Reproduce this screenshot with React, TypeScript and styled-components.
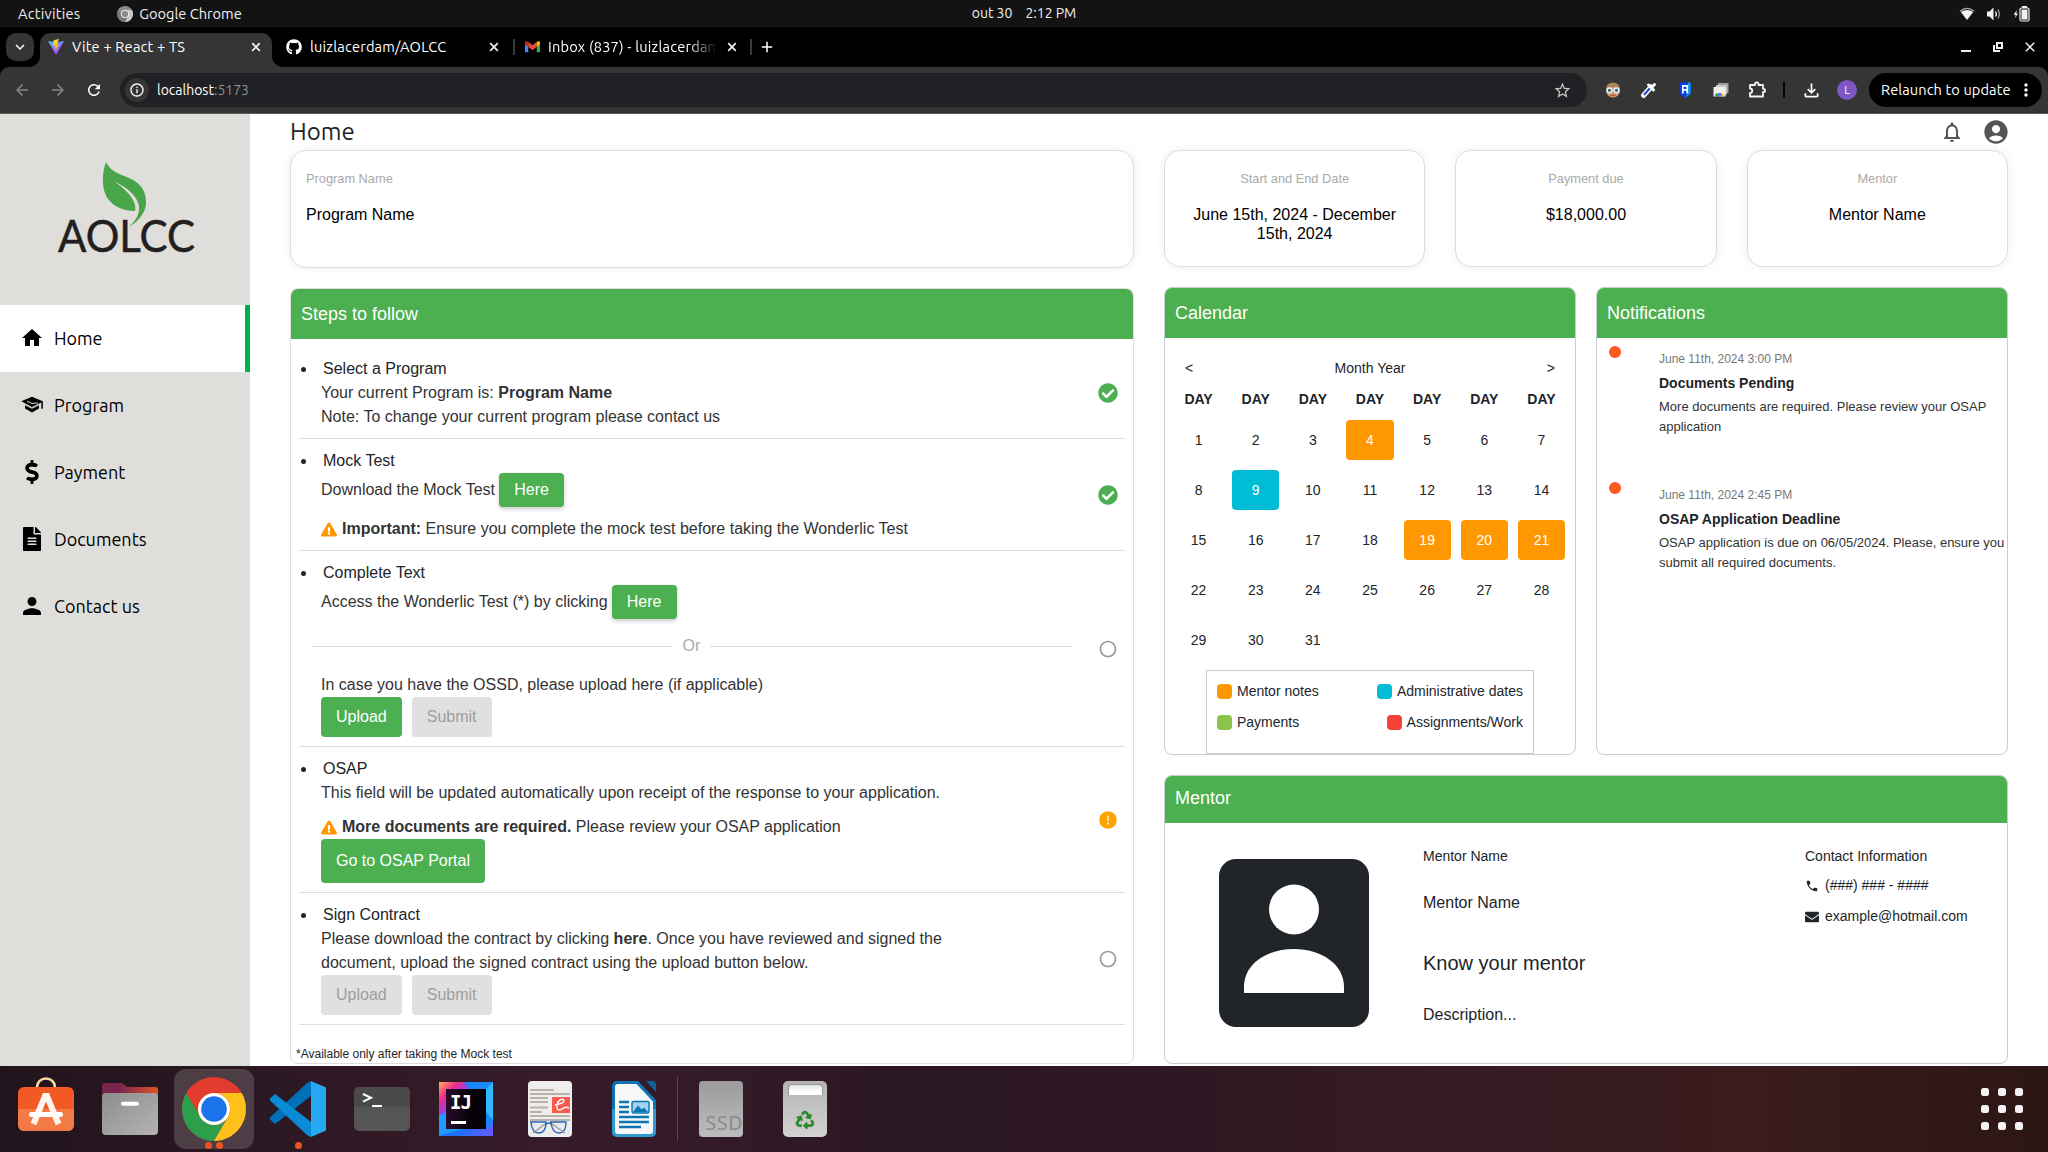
import React from 'react';
import styled, { createGlobalStyle, css } from 'styled-components';
import {
  MdAccountCircle,
  MdArrowBack,
  MdArrowForward,
  MdClose,
  MdHome,
  MdInfoOutline,
  MdNotificationsNone,
  MdRadioButtonUnchecked,
  MdRefresh,
  MdStarOutline,
  MdOutlineFileDownload,
  MdMoreVert,
  MdKeyboardArrowDown,
  MdAdd,
  MdPhone,
} from 'react-icons/md';
import { IoMdPerson } from 'react-icons/io';
import { FaCheckCircle, FaDollarSign, FaEnvelope, FaExclamationTriangle, FaFileAlt, FaGithub, FaRecycle } from 'react-icons/fa';
import { AiFillExclamationCircle } from 'react-icons/ai';

const GREEN = '#4caf50';
const UI_FONT = `Ubuntu, 'Noto Sans', sans-serif`;
const PAGE_FONT = `'Liberation Sans', Arial, sans-serif`;

const GlobalStyle = createGlobalStyle`
  *, *::before, *::after { box-sizing: border-box; }
  html, body { margin: 0; padding: 0; background: #fff; }
  body { overflow: hidden; font-family: ${PAGE_FONT}; color: #212529; }
  h1, h2, h3, p, ul { margin: 0; padding: 0; font-weight: 400; }
  svg { display: block; flex: none; overflow: visible; }
`;

const Desktop = styled.div`
  width: 2048px;
  height: 1152px;
  display: flex;
  flex-direction: column;
  overflow: hidden;
`;

/* ---------- system bar ---------- */

const SystemBar = styled.header`
  height: 27px;
  flex: none;
  display: grid;
  grid-template-columns: 1fr auto 1fr;
  align-items: center;
  background: #131313;
  color: #f0f0f0;
  font: 14px/27px ${UI_FONT};
`;
const SystemLeft = styled.div`
  display: flex;
  align-items: center;
  padding-left: 18px;
  font-size: 14.6px;
`;
const UiText = styled.span<{ $spacing?: number }>`
  letter-spacing: ${(p) => p.$spacing ?? 0}px;
  white-space: nowrap;
`;
const AppMenu = styled.div`
  display: flex;
  align-items: center;
  gap: 6px;
  margin-left: 37px;
`;
const Clock = styled.div`
  display: flex;
  gap: 13px;
`;
const SystemTray = styled.div`
  display: flex;
  justify-content: flex-end;
  align-items: center;
  gap: 11px;
  padding-right: 18px;
`;

/* ---------- browser ---------- */

const TabStrip = styled.div`
  height: 40px;
  flex: none;
  display: flex;
  align-items: center;
  padding-left: 6px;
  background: #000;
  color: #fff;
  font: 14.6px/20px ${UI_FONT};
`;
const TabSearch = styled.button`
  width: 28px;
  height: 28px;
  padding: 0;
  border: 0;
  border-radius: 10px;
  background: #353535;
  color: #fff;
  display: grid;
  place-items: center;
`;
const Tab = styled.div<{ $active?: boolean; $width: number; $left?: number; $right?: number }>`
  position: relative;
  width: ${(p) => p.$width}px;
  height: 34px;
  margin-top: 6px;
  padding: 0 ${(p) => p.$right ?? 10}px 6px ${(p) => p.$left ?? 8}px;
  display: flex;
  align-items: center;
  gap: 8px;
  border-radius: 10px 10px 0 0;
  ${(p) =>
    p.$active &&
    css`
      margin-left: 6px;
      background: #353535;
      &::before,
      &::after {
        content: '';
        position: absolute;
        bottom: 0;
        width: 10px;
        height: 10px;
      }
      &::before {
        left: -10px;
        background: radial-gradient(circle at 0 0, transparent 9.5px, #353535 10px);
      }
      &::after {
        right: -10px;
        background: radial-gradient(circle at 100% 0, transparent 9.5px, #353535 10px);
      }
    `}
`;
const TabTitle = styled.span<{ $fade?: boolean }>`
  flex: 1;
  min-width: 0;
  overflow: hidden;
  white-space: nowrap;
  letter-spacing: 0.2px;
  ${(p) =>
    p.$fade &&
    css`
      -webkit-mask-image: linear-gradient(90deg, #000 82%, transparent 99%);
      mask-image: linear-gradient(90deg, #000 82%, transparent 99%);
    `}
`;
const TabDivider = styled.i`
  width: 2px;
  height: 16px;
  background: #3a3a3a;
`;
const NewTab = styled.div`
  margin-left: 6px;
`;
const WindowButtons = styled.div`
  margin-left: auto;
  display: flex;
  align-items: center;
  gap: 16px;
  padding-right: 10px;
`;

const ToolbarBack = styled.div`
  height: 47px;
  flex: none;
  background: #000;
`;
const Toolbar = styled.div`
  height: 47px;
  display: flex;
  align-items: center;
  padding: 0 6px 0 13px;
  background: #353535;
  border-bottom: 1px solid #5d585b;
  border-radius: 9px 9px 0 0;
  color: #fff;
`;
const NavButtons = styled.div`
  display: flex;
  gap: 18px;
  width: 107px;
`;
const AddressBar = styled.div`
  width: 1467px;
  height: 34px;
  padding: 0 15px 0 5px;
  display: flex;
  align-items: center;
  border-radius: 17px;
  background: #202124;
  font: 14px/20px ${UI_FONT};
`;
const SiteInfo = styled.div`
  width: 24px;
  height: 24px;
  margin-right: 8px;
  border-radius: 50%;
  display: grid;
  place-items: center;
  background: #353535;
`;
const Port = styled.span`
  color: #909193;
`;
const StarSlot = styled.div`
  margin-left: auto;
  color: #c7c7c7;
`;
const Extensions = styled.div`
  display: flex;
  align-items: center;
  gap: 18px;
  padding-left: 17px;
`;
const ToolbarDivider = styled.i`
  width: 2px;
  height: 16px;
  margin: 0 16px 0 17px;
  background: #050505;
`;
const Avatar = styled.div`
  width: 20px;
  height: 20px;
  margin-left: 15px;
  border-radius: 50%;
  background: #7e57c2;
  font: 11px/20px ${UI_FONT};
  text-align: center;
`;
const Relaunch = styled.div`
  margin-left: auto;
  width: 173px;
  height: 34px;
  padding: 0 6px 0 12px;
  display: flex;
  align-items: center;
  justify-content: space-between;
  border-radius: 17px;
  background: #000;
  font: 14.6px/20px ${UI_FONT};
`;

/* ---------- web page ---------- */

const Page = styled.div`
  height: 952px;
  flex: none;
  display: grid;
  grid-template-columns: 250px 1fr;
  background: #fff;
  overflow: hidden;
`;
const Sidebar = styled.aside`
  background: #dfdeda;
  font-family: ${UI_FONT};
`;
const LogoBox = styled.div`
  height: 191px;
  padding: 44px 0 0 52px;
`;
const NavItem = styled.a<{ $active?: boolean }>`
  height: 67px;
  display: grid;
  grid-template-columns: 24px 1fr;
  align-items: center;
  gap: 10px;
  padding: 0 0 1px 20px;
  color: #000;
  font-size: 18px;
  background: ${(p) => (p.$active ? '#fff' : 'transparent')};
  border-right: 5px solid ${(p) => (p.$active ? '#00b050' : 'transparent')};
`;
const NavIcon = styled.span`
  display: grid;
  place-items: center;
  font-size: 24px;
`;
const Content = styled.main`
  padding: 0 40px;
  display: flex;
  flex-direction: column;
`;
const PageHeader = styled.div`
  height: 36px;
  display: flex;
  align-items: center;
  justify-content: space-between;
`;
const PageTitle = styled.h1`
  font: 400 24px/36px ${UI_FONT};
`;
const HeaderIcons = styled.div`
  display: flex;
  align-items: center;
  gap: 18px;
  margin-right: -2px;
  color: #555;
`;
const Columns = styled.div`
  display: grid;
  grid-template-columns: 844px 844px;
  gap: 30px;
`;
const Column = styled.div`
  display: flex;
  flex-direction: column;
  gap: 20px;
`;
const CardRow = styled.div`
  display: grid;
  grid-template-columns: repeat(3, 1fr);
  gap: 30px;
`;
const InfoCard = styled.section<{ $height: number; $center?: boolean }>`
  height: ${(p) => p.$height}px;
  padding: 20px 15px;
  border: 1px solid #ddd;
  border-radius: 16px;
  background: #fff;
  box-shadow: 0 0 10px rgba(0, 0, 0, 0.07);
  text-align: ${(p) => (p.$center ? 'center' : 'left')};
`;
const CardLabel = styled.p`
  font-size: 12.8px;
  line-height: 16px;
  color: #aaa;
`;
const CardValue = styled.p`
  margin-top: 18px;
  font-size: 16px;
  line-height: 19.2px;
  color: #000;
`;
const Panel = styled.section<{ $height: number; $tone?: string }>`
  height: ${(p) => p.$height}px;
  display: flex;
  flex-direction: column;
  border: 1px solid ${(p) => p.$tone ?? '#ccc'};
  border-radius: 8px;
  background: #fff;
  overflow: hidden;
`;
const PanelTitle = styled.h2<{ $height?: number; $line?: number }>`
  height: ${(p) => p.$height ?? 50}px;
  flex: none;
  padding: 0 10px;
  background: ${GREEN};
  color: #fff;
  font-size: 18px;
  line-height: ${(p) => p.$line ?? 50}px;
`;

/* steps */

const StepList = styled.ul`
  list-style: none;
  padding: 8px 8px 0;
`;
const Step = styled.li`
  padding: 10px 7px 9px 2px;
  display: flex;
  align-items: center;
  justify-content: space-between;
  border-bottom: 1px solid #ddd;
  font-size: 16px;
  line-height: 24px;
`;
const StepBody = styled.div<{ $wide?: boolean }>`
  width: ${(p) => (p.$wide ? 771 : 680)}px;
`;
const StepTitle = styled.h3`
  display: flex;
  align-items: center;
  gap: 17px;
  font-size: 16px;
  line-height: 24px;
  &::before {
    content: '';
    width: 5px;
    height: 5px;
    border-radius: 50%;
    background: #212529;
  }
`;
const StepLine = styled.p<{ $gap?: number }>`
  display: flex;
  align-items: center;
  margin-top: ${(p) => p.$gap ?? 0}px;
  padding-left: 20px;
  color: #333;
  white-space: pre;
`;
const WarningIcon = styled(FaExclamationTriangle)`
  width: 16px;
  height: 15px;
  margin-right: 5px;
  color: #ff9800;
`;
const InlineButton = styled.button`
  width: 65px;
  height: 34px;
  margin-left: 4px;
  padding: 0;
  border: 0;
  border-radius: 4px;
  background: ${GREEN};
  color: #fff;
  font: 16px/34px ${PAGE_FONT};
  box-shadow: 0 2px 4px rgba(0, 0, 0, 0.22);
`;
const ButtonRow = styled.div`
  display: flex;
  gap: 10px;
  padding-left: 20px;
`;
const ActionButton = styled.button<{ $disabled?: boolean; $height?: number }>`
  height: ${(p) => p.$height ?? 40}px;
  padding: 0 15px;
  border: 0;
  border-radius: 4px;
  background: ${(p) => (p.$disabled ? '#e0e0e0' : GREEN)};
  color: ${(p) => (p.$disabled ? '#9e9e9e' : '#fff')};
  font: 16px/24px ${PAGE_FONT};
`;
const OrDivider = styled.div`
  height: 54px;
  padding-left: 10px;
  display: flex;
  align-items: center;
  gap: 10px;
  color: #aaa;
  &::before,
  &::after {
    content: '';
    flex: 1;
    height: 1px;
    margin-top: 1px;
    background: #ddd;
  }
`;
const StepStatus = styled.span<{ $color: string }>`
  width: 20px;
  display: grid;
  place-items: center;
  font-size: 20px;
  color: ${(p) => p.$color};
`;
const Footnote = styled.p`
  margin: 20px 0 0 5px;
  font-size: 12px;
  line-height: 18px;
`;

/* calendar */

const CalendarBody = styled.div`
  padding: 20px 10px 0;
  font-size: 14px;
  line-height: 21px;
  display: flex;
  flex-direction: column;
  flex: 1;
`;
const MonthBar = styled.div`
  display: flex;
  justify-content: space-between;
  padding: 0 10px;
  margin-bottom: 10px;
`;
const DayGrid = styled.div`
  display: grid;
  grid-template-columns: repeat(7, 1fr);
  gap: 10px;
  text-align: center;
`;
const Weekday = styled.b`
  line-height: 21px;
`;
const Day = styled.span<{ $mark?: string }>`
  line-height: 40px;
  border-radius: 4px;
  background: ${(p) => p.$mark ?? 'transparent'};
  color: ${(p) => (p.$mark ? '#fff' : 'inherit')};
`;
const Legend = styled.div`
  width: 328px;
  margin: 10px auto 0;
  flex: 1;
  padding: 10px;
  display: flex;
  flex-direction: column;
  gap: 10px;
  border: 1px solid #ccc;
`;
const LegendRow = styled.div`
  display: flex;
  justify-content: space-between;
`;
const LegendItem = styled.span`
  display: flex;
  align-items: center;
  gap: 5px;
`;
const Swatch = styled.i<{ $color: string }>`
  width: 15px;
  height: 15px;
  border-radius: 4px;
  background: ${(p) => p.$color};
`;
const PanelPair = styled.div`
  display: grid;
  grid-template-columns: 1fr 1fr;
  gap: 20px;
`;

/* notifications */

const Notice = styled.article`
  height: 136px;
  display: grid;
  grid-template-columns: 50px 1fr;
  padding: 8px 0 0 12px;
`;
const NoticeDot = styled.i`
  width: 12px;
  height: 12px;
  border-radius: 50%;
  background: #ff5722;
`;
const NoticeTime = styled.p`
  margin-top: 4px;
  font-size: 12px;
  line-height: 18px;
  color: #777;
`;
const NoticeTitle = styled.p`
  margin-top: 5px;
  font-size: 14px;
  line-height: 21px;
  font-weight: 700;
`;
const NoticeText = styled.p`
  margin-top: 3px;
  font-size: 13px;
  line-height: 19.5px;
  color: #333;
`;

/* mentor */

const MentorBody = styled.div`
  display: grid;
  grid-template-columns: 258px 382px 1fr;
`;
const Portrait = styled.div`
  padding: 36px 0 0 54px;
`;
const MentorInfo = styled.div`
  padding-top: 21px;
`;
const MentorLine = styled.p<{ $size: number; $top: number }>`
  margin-top: ${(p) => p.$top}px;
  font-size: ${(p) => p.$size}px;
  line-height: 24px;
`;
const ContactLine = styled.p<{ $top: number }>`
  margin-top: ${(p) => p.$top}px;
  display: flex;
  align-items: center;
  gap: 6px;
  font-size: 14px;
  line-height: 21px;
`;

/* ---------- dock ---------- */

const Dock = styled.footer`
  height: 86px;
  flex: none;
  display: flex;
  align-items: center;
  padding: 0 20px 0 4px;
  background: linear-gradient(
    90deg,
    #21141c 0,
    #2b1822 12%,
    #361b29 26%,
    #351b29 33%,
    #2a1722 44%,
    #2d1722 56%,
    #371b24 72%,
    #3a1c1c 86%,
    #2c1614 100%
  );
`;
const DockItem = styled.div<{ $active?: boolean }>`
  position: relative;
  width: 80px;
  height: 80px;
  margin: 0 2px;
  display: grid;
  place-items: center;
  border-radius: 12px;
  background: ${(p) => (p.$active ? 'rgba(255,255,255,0.17)' : 'transparent')};
`;
const RunningDots = styled.div`
  position: absolute;
  left: 0;
  right: 0;
  bottom: 0;
  display: flex;
  justify-content: center;
  gap: 4px;
  i {
    width: 7px;
    height: 7px;
    border-radius: 50%;
    background: #e95420;
  }
`;
const DockDivider = styled.i`
  width: 1px;
  height: 64px;
  margin: 0 1px;
  background: #5a444f;
`;
const AppsGrid = styled.div`
  margin-left: auto;
  display: grid;
  grid-template-columns: repeat(3, 8px);
  grid-auto-rows: 8px;
  gap: 9px;
  padding-right: 5px;
  i {
    border-radius: 2.5px;
    background: #f4f2f3;
  }
`;

/* ---------- drawings ---------- */

const ChromeGlyph = ({ size, mono }: { size: number; mono?: boolean }) => {
  const [r, g, y, b] = mono ? ['#8d8d8d', '#777', '#c9c9c9', '#8a8a8a'] : ['#e33b2e', '#2c9f4c', '#fcc21b', '#1a73e8'];
  return (
    <svg width={size} height={size} viewBox="0 0 64 64">
      <circle cx="32" cy="32" r="32" fill={r} />
      <path d="M4.3 16 A32 32 0 0 0 32 64 L46 40 A16 16 0 0 1 18.2 40 Z" fill={g} />
      <path d="M32 16 H59.7 A32 32 0 0 1 32 64 L46 40 A16 16 0 0 0 32 16Z" fill={y} />
      <circle cx="32" cy="32" r="16" fill="#fff" />
      <circle cx="32" cy="32" r="12.8" fill={b} />
    </svg>
  );
};

const ViteGlyph = () => (
  <svg width="16" height="16" viewBox="0 0 32 32">
    <defs>
      <linearGradient id="vite-body" x1="0" y1="0" x2=".6" y2="1">
        <stop offset="0" stopColor="#41d1ff" />
        <stop offset="1" stopColor="#bd34fe" />
      </linearGradient>
      <linearGradient id="vite-bolt" x1="0" y1="0" x2="0" y2="1">
        <stop offset="0" stopColor="#ffdd35" />
        <stop offset="1" stopColor="#ffa800" />
      </linearGradient>
    </defs>
    <path d="M0 4 L16 32 L32 4 L17 7Z" fill="url(#vite-body)" />
    <path d="M22 0 L11 2.3 L10.3 14 L14.5 13 L13 19 L16 18 L14.5 25 L21.5 11 L17.5 12Z" fill="url(#vite-bolt)" />
  </svg>
);

const GmailGlyph = () => (
  <svg width="15" height="16" viewBox="0 0 32 26">
    <path d="M0 6 V24 H7 V11Z" fill="#4285f4" />
    <path d="M25 11 V24 H32 V6Z" fill="#34a853" />
    <path d="M7 2 V13 L16 20 L25 13 V2 L16 9Z" fill="#ea4335" />
    <path d="M25 2 V13 L32 7 V4 C32 0 28 0 25 2Z" fill="#fbbc04" />
    <path d="M7 2 V13 L0 7 V4 C0 0 4 0 7 2Z" fill="#c5221f" />
  </svg>
);

const LeafLogo = () => (
  <svg width="150" height="104" viewBox="0 0 150 104">
    <text
      x="6"
      y="94"
      fontFamily="Lato, sans-serif"
      fontSize="43.5"
      fill="#231f20"
      stroke="#231f20"
      strokeWidth=".5"
      textLength="137"
      lengthAdjust="spacingAndGlyphs"
    >
      AOLCC
    </text>
    <path
      fill="#48a548"
      d="M54 4 C50 15 49 31 56 41 C62 49 72 53 83 53 C85 46 80 36 62 23 C76 30 85 38 87 48 C88 57 83 63 77 69 C88 62 95 53 94 42 C93 30 86 24 77 20 C67 16 58 13 54 4Z"
    />
  </svg>
);

const CapGlyph = () => (
  <svg width="24" height="24" viewBox="0 0 24 24">
    <path d="M1.200 8.300 L12 3.800 L22.800 8.300 V15.800 H21.300 V9.600 L12 14 Z" />
    <path d="M5 11.500 L12 15 L19 11.500 V15.500 L12 19.500 L5 15.500Z" />
    <path d="M7 8.700 Q10.500 9 12 10.600 Q14.500 9.600 18 10.200" fill="none" stroke="#dfdeda" strokeWidth="1" />
    <path d="M5 12 L12 15.300 L19 12" fill="none" stroke="#dfdeda" strokeWidth=".9" />
  </svg>
);

const PortraitGlyph = () => (
  <svg width="150" height="168" viewBox="0 0 150 168">
    <rect width="150" height="168" rx="17" fill="#212529" />
    <circle cx="75" cy="50.5" r="25" fill="#fff" />
    <path d="M25 134 V128 C25 105 48 90 75 90 C102 90 125 105 125 128 V134Z" fill="#fff" />
  </svg>
);

const PuzzleGlyph = () => (
  <svg width="18" height="18" viewBox="0 0 18 18">
    <path
      d="M2 4 H7 V3.200 A1.500 1.500 0 0 1 10.500 3.200 V4 H15 V7.800 H15.500 A1.500 1.500 0 0 1 15.500 11 H15 V15.500 H2 V12 A2.200 2.200 0 0 0 2 7.500Z"
      fill="none"
      stroke="#f4f4f4"
      strokeWidth="1.800"
      strokeLinejoin="round"
    />
  </svg>
);

const WifiGlyph = () => (
  <svg width="16" height="14" viewBox="0 0 16 14">
    <path d="M1 4.200 Q8 -1.500 15 4.200" fill="none" stroke="#aaa" strokeWidth="1.400" />
    <path d="M1.800 5 Q8 1 14.200 5 L8 13Z" fill="#f2f2f2" />
  </svg>
);
const VolumeGlyph = () => (
  <svg width="16" height="14" viewBox="0 0 16 14">
    <path d="M1 4.500 H3.500 L7.500 .5 V13.500 L3.500 9.500 H1Z" fill="#f2f2f2" />
    <path d="M9.500 4.500 Q11.200 7 9.500 9.500" stroke="#f2f2f2" strokeWidth="1.300" fill="none" />
    <path d="M11.800 2.500 Q15 7 11.800 11.500" stroke="#999" strokeWidth="1.300" fill="none" />
  </svg>
);
const BatteryGlyph = () => (
  <svg width="17" height="16" viewBox="0 0 17 16">
    <path d="M4 4 L.5 8.700 H2.700 L2 12 L5 7.500 H3.200Z" fill="#f2f2f2" />
    <rect x="9" y="0" width="5" height="2" fill="#f2f2f2" />
    <rect x="7" y="2" width="9" height="13" rx="1.500" fill="none" stroke="#f2f2f2" strokeWidth="1.200" />
    <rect x="8.500" y="3.500" width="6" height="10" fill="#f2f2f2" />
  </svg>
);

const MinimizeGlyph = () => (
  <svg width="16" height="16" viewBox="0 0 16 16">
    <rect x="3" y="11" width="10" height="2" fill="#eee" />
  </svg>
);
const RestoreGlyph = () => (
  <svg width="16" height="16" viewBox="0 0 16 16" fill="none" stroke="#eee" strokeWidth="2">
    <rect x="7" y="4" width="5" height="5" />
    <path d="M4 6 V12 H10" />
  </svg>
);
const CrossGlyph = ({ size = 10, stroke = 1.7 }: { size?: number; stroke?: number }) => (
  <svg width={size} height={size} viewBox="0 0 10 10" stroke="#f1f1f1" strokeWidth={stroke}>
    <path d="M1.200 1.200 L8.800 8.800 M8.800 1.200 L1.200 8.800" />
  </svg>
);

const FaceExtension = () => (
  <svg width="18" height="18" viewBox="0 0 18 18">
    <circle cx="9" cy="9.500" r="7" fill="#d39a72" />
    <path d="M2 8 Q2.500 1.500 9 1.500 Q15.500 1.500 16 8 Q9 4 2 8Z" fill="#a9835a" />
    <circle cx="5.500" cy="9.300" r="2.400" fill="#2f6a82" stroke="#e8f2f5" strokeWidth="1.500" />
    <circle cx="12.500" cy="9.300" r="2.400" fill="#2f6a82" stroke="#e8f2f5" strokeWidth="1.500" />
    <path d="M6.500 14 Q9 15.200 11.500 14" stroke="#b0453b" strokeWidth="1.300" fill="none" />
  </svg>
);
const PickerExtension = () => (
  <svg width="18" height="18" viewBox="0 0 18 18">
    <path d="M3.500 14.500 L11 6" stroke="#fff" strokeWidth="5" strokeLinecap="round" />
    <path d="M4.500 13.300 L9.500 7.700" stroke="#2a4cc4" strokeWidth="2.200" strokeLinecap="round" />
    <path d="M8.500 4 L13.500 9 M12 6 L14.500 3.500" stroke="#fff" strokeWidth="3" strokeLinecap="round" />
  </svg>
);
const ShieldExtension = () => (
  <svg width="18" height="18" viewBox="0 0 18 18">
    <path d="M3.500 1.500 H14.500 V12.500 L9 17 L3.500 12.500Z" fill="#0a3df0" />
    <path d="M12 1.500 H14.500 V12.500 L9 17 L12 12Z" fill="#0fa0f5" />
    <path d="M6.800 12.500 V4.800 H11.200 V12.500 M6.800 8.800 H11.200" stroke="#fff" strokeWidth="1.700" fill="none" />
  </svg>
);
const StoreExtension = () => (
  <svg width="18" height="18" viewBox="0 0 18 18">
    <path d="M6 2 H16.500 V12 H6Z" fill="#9d9d9d" />
    <path d="M4 4 H15 V13.500 H4Z" fill="#c9c9c9" />
    <path d="M1.500 6 H13.500 V15.500 H1.500Z" fill="#efefef" />
    <path d="M3 15.500 A4.800 4.800 0 0 1 12 15.500Z" fill="#e03a2e" />
    <path d="M2.900 15.500 L4 11.800 L7 15.500Z" fill="#2fa04e" />
    <path d="M8 15.500 L11 12 L12 15.500Z" fill="#fbc02d" />
    <circle cx="7.500" cy="14" r="2" fill="#4285f4" />
  </svg>
);

const SoftwareIcon = () => (
  <svg width="56" height="56" viewBox="0 0 56 56">
    <path d="M19 8 V6 A9 8.500 0 0 1 37 6 V8" fill="none" stroke="#f5d9a6" strokeWidth="2.600" />
    <rect y="6" width="56" height="44" rx="6" fill="#f15a24" />
    <path d="M0 28 H56 V44 A6 6 0 0 1 50 50 H6 A6 6 0 0 1 0 44Z" fill="#f47a45" />
    <path d="M15.500 43 L27 15 H29 L40.500 43" fill="none" stroke="#fff4ee" strokeWidth="6" />
    <path d="M13.500 33.500 H42.500" stroke="#fff" strokeWidth="5" strokeLinecap="round" />
  </svg>
);
const FilesIcon = () => (
  <svg width="56" height="56" viewBox="0 0 56 56">
    <defs>
      <linearGradient id="files-tab">
        <stop offset=".3" stopColor="#78244f" />
        <stop offset="1" stopColor="#e35424" />
      </linearGradient>
      <linearGradient id="files-front" x1="0" y1="0" x2="1" y2="1">
        <stop offset="0" stopColor="#8d8d8d" />
        <stop offset="1" stopColor="#b4b4b4" />
      </linearGradient>
    </defs>
    <path d="M0 5 A3 3 0 0 1 3 2 H20 L25 6 H53 A3 3 0 0 1 56 9 V25 H0Z" fill="url(#files-tab)" />
    <rect y="12" width="56" height="42" rx="4" fill="url(#files-front)" />
    <path d="M21 22.800 H35" stroke="#fff" strokeWidth="4" strokeLinecap="round" />
  </svg>
);
const CodeIcon = () => (
  <svg width="56" height="56" viewBox="0 0 56 56">
    <path d="M41 15 L5 43 L0 38.500 V36.500 L37 2 L41 0Z" fill="#0071b8" />
    <path d="M41 41 L5 13 L0 17.500 V19.500 L37 54 L41 56Z" fill="#0a8bd6" />
    <path d="M41 0 L56 6.500 V49.500 L41 56Z" fill="#27a8f2" />
  </svg>
);
const TerminalIcon = () => (
  <svg width="56" height="56" viewBox="0 0 56 56">
    <rect y="6" width="56" height="44" rx="5" fill="#555" />
    <path d="M0 26 V11 A5 5 0 0 1 5 6 H51 A5 5 0 0 1 56 11 V26Z" fill="#4a4a4a" />
    <path d="M9 13 L17 16.800 L9 20.600" fill="none" stroke="#fff" strokeWidth="2" />
    <path d="M18 25 H28" stroke="#fff" strokeWidth="2" />
  </svg>
);
const IntelliJIcon = () => (
  <svg width="54" height="54" viewBox="0 0 54 54">
    <defs>
      <linearGradient id="ij-edge" x1="0" y1="0" x2="1" y2="1">
        <stop offset="0" stopColor="#ffb15a" />
        <stop offset=".18" stopColor="#f0288a" />
        <stop offset=".36" stopColor="#7c4dff" />
        <stop offset=".6" stopColor="#1273ff" />
        <stop offset="1" stopColor="#6a5cff" />
      </linearGradient>
      <linearGradient id="ij-core">
        <stop offset="0" stopColor="#2b0a2c" />
        <stop offset=".6" stopColor="#050308" />
      </linearGradient>
    </defs>
    <rect width="54" height="54" fill="url(#ij-edge)" />
    <path d="M54 0 V40 L47 47 V7 H30 L25 0Z" fill="#1787fb" />
    <path d="M0 54 V34 L7 30 V47 H24Z" fill="#1d9bff" />
    <path d="M54 0 L47 7 V30 L54 38Z" fill="#2fb8ff" />
    <rect x="7" y="7" width="40" height="40" fill="url(#ij-core)" />
    <text x="11" y="27" fontFamily="'DejaVu Sans Mono', monospace" fontWeight="700" fontSize="19" fill="#fff" textLength="22">
      IJ
    </text>
    <path d="M12 40.500 H27" stroke="#fff" strokeWidth="3" />
  </svg>
);
const ReaderIcon = () => (
  <svg width="44" height="56" viewBox="0 0 44 56">
    <rect width="44" height="56" rx="4" fill="#ededeb" />
    <path d="M2 9 H26 M2 13 H42 M2 17 H20 M2 21 H20 M2 26.500 H20 M2 31 H14 M2 35 H42 M2 39 H42" stroke="#b9b1a6" strokeWidth="2" />
    <rect x="24" y="16" width="18" height="16" fill="#fa5a4c" />
    <path d="M27 24 Q38 22 35.500 18.500 Q31 17 29 24 Q28 31 34 28 Q38 25 41 27" fill="none" stroke="#fff" strokeWidth="1.400" />
    <path d="M2 41 H18 Q18 52 10.500 52 Q4 52 3 41Z M22 41 H38 Q38 52 31 52 Q24 52 23 41Z M18 43 Q20.500 41 23 43" fill="rgba(230,233,238,.85)" stroke="#2767b8" strokeWidth="1.400" />
    <path d="M5 52 L17 43 M24 43 L37 52" stroke="#999" strokeWidth="1.300" />
  </svg>
);
const WriterIcon = () => (
  <svg width="44" height="56" viewBox="0 0 44 56">
    <path d="M5 0 H26 L44 19 V51 A5 5 0 0 1 39 56 H5 A5 5 0 0 1 0 51 V5 A5 5 0 0 1 5 0Z" fill="#0f75b0" />
    <path d="M0 28 H44 V51 A5 5 0 0 1 39 56 H5 A5 5 0 0 1 0 51Z" fill="#2f9bd0" />
    <path d="M34 0 H40 A4 4 0 0 1 44 4 V11Z" fill="#0f6296" />
    <path d="M6 3 H24.500 L41 20.500 V50 A3 3 0 0 1 38 53 H6 A3 3 0 0 1 3 50 V6 A3 3 0 0 1 6 3Z" fill="#f6f8fa" />
    <path d="M7 21 H17 M7 26 H17 M7 31 H17 M7 36 H37 M7 41 H37 M7 46 H29" stroke="#0f75b0" strokeWidth="2.300" />
    <rect x="20" y="20.500" width="17" height="11.500" rx="1.500" fill="#9fd4f2" stroke="#0f75b0" strokeWidth="1.400" />
    <path d="M21 31 L26 24.500 L29.500 28.500 L32 26.500 L36 31Z" fill="#0f75b0" />
  </svg>
);
const DiskIcon = () => (
  <svg width="44" height="56" viewBox="0 0 44 56">
    <defs>
      <linearGradient id="disk" x1="0" y1="0" x2="0" y2="1">
        <stop offset="0" stopColor="#9b9b9b" />
        <stop offset="1" stopColor="#bdbdbd" />
      </linearGradient>
    </defs>
    <rect width="44" height="56" rx="4" fill="url(#disk)" />
    <text x="6.500" y="48.500" fontFamily="'Noto Sans', sans-serif" fontSize="19.500" fill="#8b8b8b" textLength="37">
      SSD
    </text>
  </svg>
);
const TrashBody = styled.div`
  width: 44px;
  height: 56px;
  padding: 3px 4px 0;
  display: flex;
  flex-direction: column;
  align-items: center;
  gap: 16px;
  border-radius: 5px;
  background: linear-gradient(#b4b4b4, #d2d2d2);
`;
const TrashPaper = styled.i`
  width: 35px;
  height: 11px;
  border: 1px solid #999;
  border-bottom: 0;
  border-radius: 4px 4px 0 0;
  background: linear-gradient(#e2e2e2, #fff 60%);
`;
const RecycleMark = styled(FaRecycle)`
  stroke: #27882a;
  stroke-width: 14px;
`;

/* ---------- data ---------- */

const NAV = [
  { label: 'Home', icon: <MdHome /> },
  { label: 'Program', icon: <CapGlyph /> },
  { label: 'Payment', icon: <FaDollarSign /> },
  { label: 'Documents', icon: <FaFileAlt /> },
  { label: 'Contact us', icon: <IoMdPerson /> },
];

const MARKS: Record<number, string> = { 4: '#ff9800', 9: '#00bcd4', 19: '#ff9800', 20: '#ff9800', 21: '#ff9800' };

const NOTICES = [
  { time: 'June 11th, 2024 3:00 PM', title: 'Documents Pending', text: 'More documents are required. Please review your OSAP application' },
  {
    time: 'June 11th, 2024 2:45 PM',
    title: 'OSAP Application Deadline',
    text: 'OSAP application is due on 06/05/2024. Please, ensure you submit all required documents.',
  },
];

const Done = () => (
  <StepStatus $color={GREEN}>
    <FaCheckCircle />
  </StepStatus>
);
const Pending = () => (
  <StepStatus $color="#999">
    <MdRadioButtonUnchecked />
  </StepStatus>
);

const Browser = () => (
  <>
    <TabStrip>
      <TabSearch>
        <MdKeyboardArrowDown size={18} />
      </TabSearch>
      <Tab $active $width={232} $right={11}>
        <ViteGlyph />
        <TabTitle>Vite + React + TS</TabTitle>
        <CrossGlyph />
      </Tab>
      <Tab $width={241} $left={14} $right={14}>
        <FaGithub size={16} />
        <TabTitle>luizlacerdam/AOLCC</TabTitle>
        <CrossGlyph />
      </Tab>
      <TabDivider />
      <Tab $width={235} $left={10} $right={13}>
        <GmailGlyph />
        <TabTitle $fade>Inbox (837) - luizlacerdam</TabTitle>
        <CrossGlyph />
      </Tab>
      <TabDivider />
      <NewTab>
        <MdAdd size={18} />
      </NewTab>
      <WindowButtons>
        <MinimizeGlyph />
        <RestoreGlyph />
        <MdClose size={16} />
      </WindowButtons>
    </TabStrip>
    <ToolbarBack>
      <Toolbar>
        <NavButtons>
          <MdArrowBack size={18} color="#858585" />
          <MdArrowForward size={18} color="#858585" />
          <MdRefresh size={18} />
        </NavButtons>
        <AddressBar>
          <SiteInfo>
            <MdInfoOutline size={16} />
          </SiteInfo>
          <UiText>
            localhost<Port>:5173</Port>
          </UiText>
          <StarSlot>
            <MdStarOutline size={19} />
          </StarSlot>
        </AddressBar>
        <Extensions>
          <FaceExtension />
          <PickerExtension />
          <ShieldExtension />
          <StoreExtension />
          <PuzzleGlyph />
        </Extensions>
        <ToolbarDivider />
        <MdOutlineFileDownload size={21} />
        <Avatar>L</Avatar>
        <Relaunch>
          <UiText $spacing={0.1}>Relaunch to update</UiText>
          <MdMoreVert size={20} />
        </Relaunch>
      </Toolbar>
    </ToolbarBack>
  </>
);

const Steps = () => (
  <Panel $height={776} $tone="#ddd">
    <PanelTitle>Steps to follow</PanelTitle>
    <StepList>
      <Step>
        <StepBody>
          <StepTitle>Select a Program</StepTitle>
          <StepLine>
            Your current Program is: <b>Program Name</b>
          </StepLine>
          <StepLine>Note: To change your current program please contact us</StepLine>
        </StepBody>
        <Done />
      </Step>
      <Step>
        <StepBody>
          <StepTitle>Mock Test</StepTitle>
          <StepLine>
            Download the Mock Test<InlineButton>Here</InlineButton>
          </StepLine>
          <StepLine $gap={10}>
            <WarningIcon />
            <b>Important:</b> Ensure you complete the mock test before taking the Wonderlic Test
          </StepLine>
        </StepBody>
        <Done />
      </Step>
      <Step>
        <StepBody $wide>
          <StepTitle>Complete Text</StepTitle>
          <StepLine>
            Access the Wonderlic Test (*) by clicking<InlineButton>Here</InlineButton>
          </StepLine>
          <OrDivider>Or</OrDivider>
          <StepLine>In case you have the OSSD, please upload here (if applicable)</StepLine>
          <ButtonRow>
            <ActionButton>Upload</ActionButton>
            <ActionButton $disabled>Submit</ActionButton>
          </ButtonRow>
        </StepBody>
        <Pending />
      </Step>
      <Step>
        <StepBody>
          <StepTitle>OSAP</StepTitle>
          <StepLine>This field will be updated automatically upon receipt of the response to your application.</StepLine>
          <StepLine $gap={10}>
            <WarningIcon />
            <b>More documents are required.</b> Please review your OSAP application
          </StepLine>
          <ButtonRow>
            <ActionButton $height={44}>Go to OSAP Portal</ActionButton>
          </ButtonRow>
        </StepBody>
        <StepStatus $color="#ffa500">
          <AiFillExclamationCircle />
        </StepStatus>
      </Step>
      <Step>
        <StepBody>
          <StepTitle>Sign Contract</StepTitle>
          <StepLine>
            Please download the contract by clicking <b>here</b>. Once you have reviewed and signed the
          </StepLine>
          <StepLine>document, upload the signed contract using the upload button below.</StepLine>
          <ButtonRow>
            <ActionButton $disabled>Upload</ActionButton>
            <ActionButton $disabled>Submit</ActionButton>
          </ButtonRow>
        </StepBody>
        <Pending />
      </Step>
    </StepList>
    <Footnote>*Available only after taking the Mock test</Footnote>
  </Panel>
);

const Calendar = () => (
  <Panel $height={468}>
    <PanelTitle>Calendar</PanelTitle>
    <CalendarBody>
      <MonthBar>
        <span>&lt;</span>
        <span>Month Year</span>
        <span>&gt;</span>
      </MonthBar>
      <DayGrid>
        {Array.from({ length: 7 }, (_, i) => (
          <Weekday key={i}>DAY</Weekday>
        ))}
        {Array.from({ length: 31 }, (_, i) => (
          <Day key={i} $mark={MARKS[i + 1]}>
            {i + 1}
          </Day>
        ))}
      </DayGrid>
      <Legend>
        <LegendRow>
          <LegendItem>
            <Swatch $color="#ff9800" />
            Mentor notes
          </LegendItem>
          <LegendItem>
            <Swatch $color="#00bcd4" />
            Administrative dates
          </LegendItem>
        </LegendRow>
        <LegendRow>
          <LegendItem>
            <Swatch $color="#8bc34a" />
            Payments
          </LegendItem>
          <LegendItem>
            <Swatch $color="#f44336" />
            Assignments/Work
          </LegendItem>
        </LegendRow>
      </Legend>
    </CalendarBody>
  </Panel>
);

const Mentor = () => (
  <Panel $height={289}>
    <PanelTitle $height={47} $line={45}>
      Mentor
    </PanelTitle>
    <MentorBody>
      <Portrait>
        <PortraitGlyph />
      </Portrait>
      <MentorInfo>
        <MentorLine $size={14} $top={0}>
          Mentor Name
        </MentorLine>
        <MentorLine $size={16} $top={23}>
          Mentor Name
        </MentorLine>
        <MentorLine $size={20} $top={36}>
          Know your mentor
        </MentorLine>
        <MentorLine $size={16} $top={28}>
          Description...
        </MentorLine>
      </MentorInfo>
      <MentorInfo>
        <MentorLine $size={14} $top={0}>
          Contact Information
        </MentorLine>
        <ContactLine $top={7}>
          <MdPhone size={14} />
          (###) ### - ####
        </ContactLine>
        <ContactLine $top={10}>
          <FaEnvelope size={14} />
          example@hotmail.com
        </ContactLine>
      </MentorInfo>
    </MentorBody>
  </Panel>
);

export default function App() {
  return (
    <Desktop>
      <GlobalStyle />
      <SystemBar>
        <SystemLeft>
          <UiText $spacing={0.25}>Activities</UiText>
          <AppMenu>
            <ChromeGlyph size={16} mono />
            <UiText>Google Chrome</UiText>
          </AppMenu>
        </SystemLeft>
        <Clock>
          <span>out 30</span>
          <span>2:12 PM</span>
        </Clock>
        <SystemTray>
          <WifiGlyph />
          <VolumeGlyph />
          <BatteryGlyph />
        </SystemTray>
      </SystemBar>
      <Browser />
      <Page>
        <Sidebar>
          <LogoBox>
            <LeafLogo />
          </LogoBox>
          {NAV.map((n, i) => (
            <NavItem key={n.label} $active={i === 0}>
              <NavIcon>{n.icon}</NavIcon>
              <UiText>{n.label}</UiText>
            </NavItem>
          ))}
        </Sidebar>
        <Content>
          <PageHeader>
            <PageTitle>Home</PageTitle>
            <HeaderIcons>
              <MdNotificationsNone size={24} />
              <MdAccountCircle size={28} />
            </HeaderIcons>
          </PageHeader>
          <Columns>
            <Column>
              <InfoCard $height={118}>
                <CardLabel>Program Name</CardLabel>
                <CardValue>Program Name</CardValue>
              </InfoCard>
              <Steps />
            </Column>
            <Column>
              <CardRow>
                <InfoCard $height={117} $center>
                  <CardLabel>Start and End Date</CardLabel>
                  <CardValue>June 15th, 2024 - December 15th, 2024</CardValue>
                </InfoCard>
                <InfoCard $height={117} $center>
                  <CardLabel>Payment due</CardLabel>
                  <CardValue>$18,000.00</CardValue>
                </InfoCard>
                <InfoCard $height={117} $center>
                  <CardLabel>Mentor</CardLabel>
                  <CardValue>Mentor Name</CardValue>
                </InfoCard>
              </CardRow>
              <PanelPair>
                <Calendar />
                <Panel $height={468}>
                  <PanelTitle>Notifications</PanelTitle>
                  {NOTICES.map((n) => (
                    <Notice key={n.title}>
                      <NoticeDot />
                      <div>
                        <NoticeTime>{n.time}</NoticeTime>
                        <NoticeTitle>{n.title}</NoticeTitle>
                        <NoticeText>{n.text}</NoticeText>
                      </div>
                    </Notice>
                  ))}
                </Panel>
              </PanelPair>
              <Mentor />
            </Column>
          </Columns>
        </Content>
      </Page>
      <Dock>
        <DockItem>
          <SoftwareIcon />
        </DockItem>
        <DockItem>
          <FilesIcon />
        </DockItem>
        <DockItem $active>
          <ChromeGlyph size={64} />
          <RunningDots>
            <i />
            <i />
          </RunningDots>
        </DockItem>
        <DockItem>
          <CodeIcon />
          <RunningDots>
            <i />
          </RunningDots>
        </DockItem>
        <DockItem>
          <TerminalIcon />
        </DockItem>
        <DockItem>
          <IntelliJIcon />
        </DockItem>
        <DockItem>
          <ReaderIcon />
        </DockItem>
        <DockItem>
          <WriterIcon />
        </DockItem>
        <DockDivider />
        <DockItem>
          <DiskIcon />
        </DockItem>
        <DockItem>
          <TrashBody>
            <TrashPaper />
            <RecycleMark size={18} color="#27882a" />
          </TrashBody>
        </DockItem>
        <AppsGrid>
          {Array.from({ length: 9 }, (_, i) => (
            <i key={i} />
          ))}
        </AppsGrid>
      </Dock>
    </Desktop>
  );
}
